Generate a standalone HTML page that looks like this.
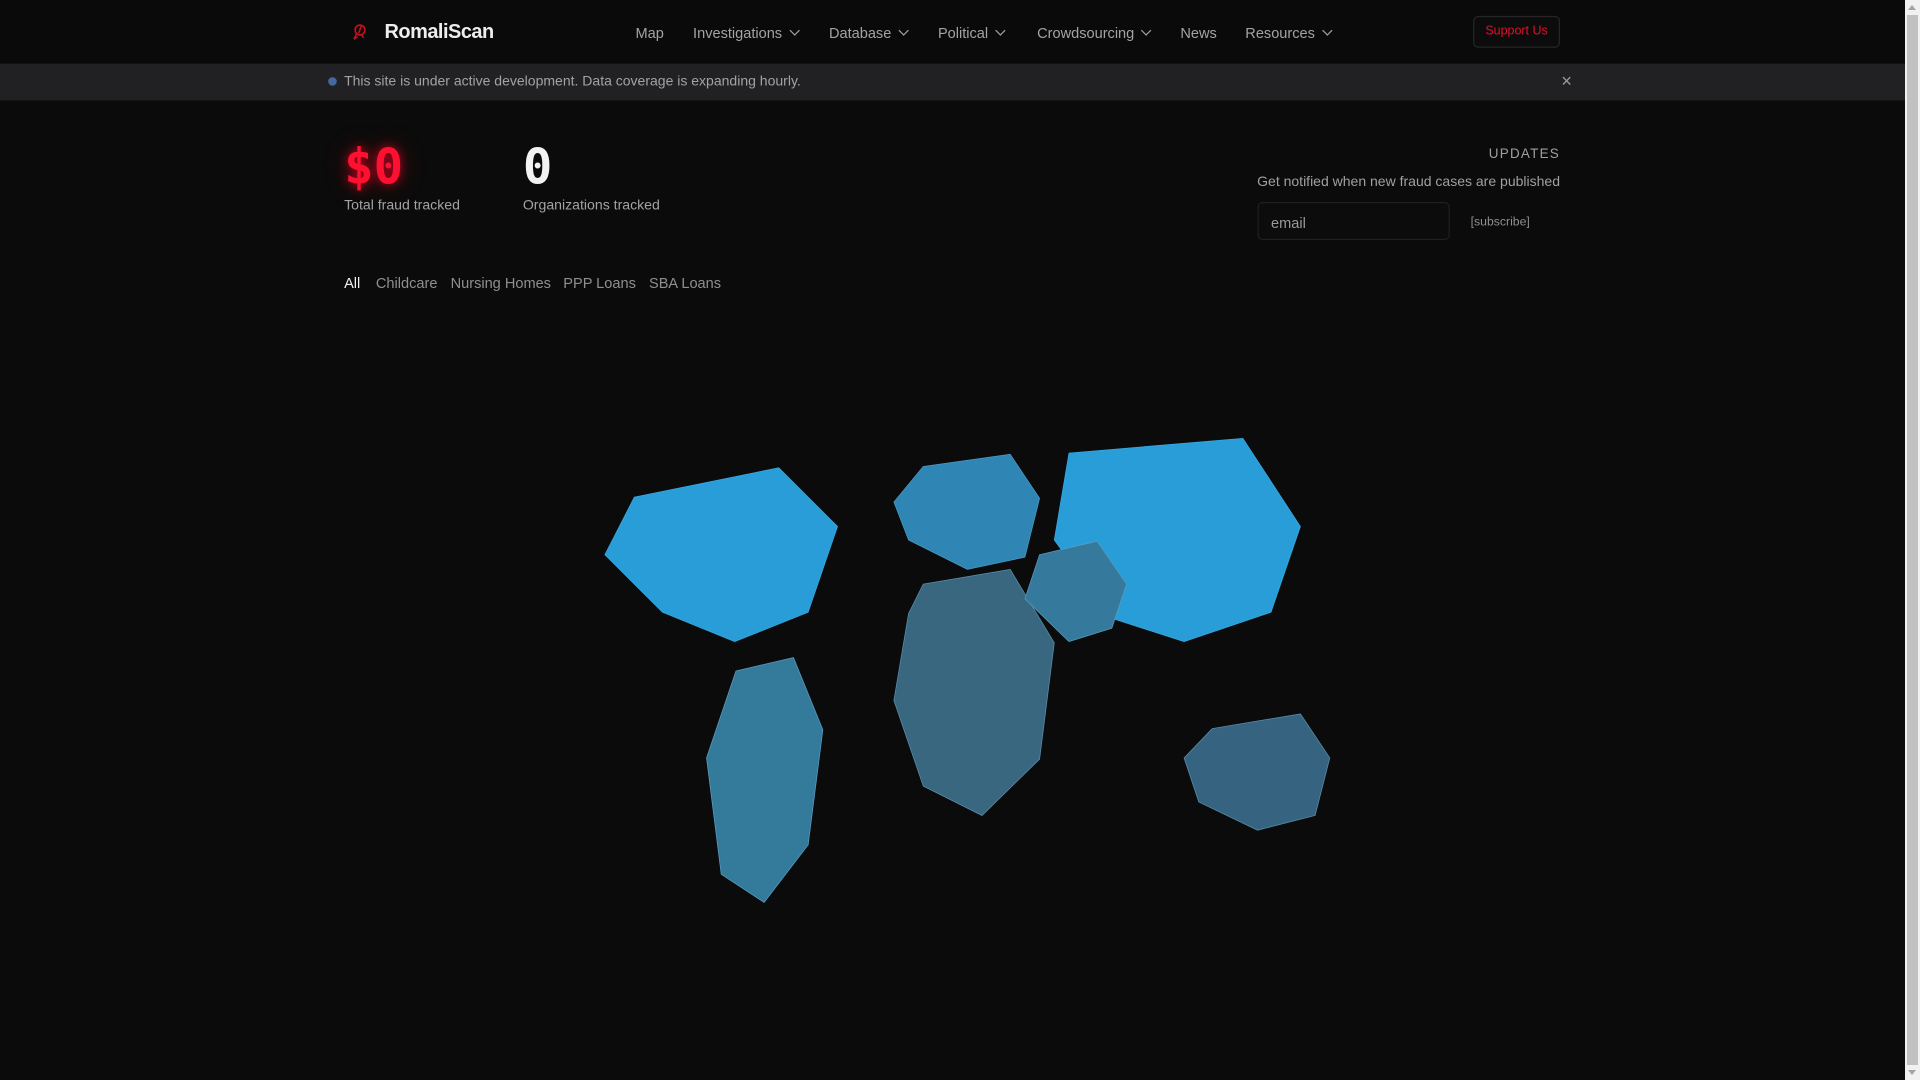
<!DOCTYPE html>
<html><head><meta charset="utf-8"><style>
html,body{margin:0;padding:0;background:#0b0b0b;overflow:hidden;width:1920px;height:1080px}
#s{position:absolute;left:0;top:0;width:1568px;height:882px;transform:scale(1.22449);transform-origin:0 0;font-family:"Liberation Sans",sans-serif;color:#a0a0a0}
.a{position:absolute;white-space:nowrap}
.nav{font-size:11.9px;color:#a3a3a3;top:19.5px}
.chev{display:inline-block;width:5px;height:5px;border-right:1.2px solid #a3a3a3;border-bottom:1.2px solid #a3a3a3;transform:rotate(45deg);margin-left:7px;position:relative;top:-3px}
.tab{font-size:11.9px;color:#8f8f8f;top:224px}
</style></head><body>
<div id="s">
<div class="a" style="left:0;top:0;width:1556px;height:52px;background:#0a0a0a;border-bottom:1px solid #141414"></div>
<svg class="a" style="left:286px;top:18px" width="16" height="16" viewBox="0 0 16 16"><circle cx="8" cy="6.5" r="4" fill="none" stroke="#c0101d" stroke-width="1.4"/><path d="M7 9 L9 3 M5 10 L3 14 M9 10 L11 13 M3 14 L6 12" stroke="#c0101d" stroke-width="1.3" fill="none"/></svg>
<div class="a" style="left:314px;top:16.5px;font-size:16.3px;font-weight:bold;color:#ededed;letter-spacing:-0.4px">RomaliScan</div>
<div class="a nav" style="left:519px">Map</div>
<div class="a nav" style="left:566px">Investigations<span class="chev"></span></div>
<div class="a nav" style="left:677px">Database<span class="chev"></span></div>
<div class="a nav" style="left:766px">Political<span class="chev"></span></div>
<div class="a nav" style="left:847px">Crowdsourcing<span class="chev"></span></div>
<div class="a nav" style="left:964px">News</div>
<div class="a nav" style="left:1017px">Resources<span class="chev"></span></div>
<div class="a" style="left:1203px;top:13px;width:69px;height:24px;border:1px solid #262626;border-radius:4px;background:#0c0c0c;color:#e0102a;font-size:10.2px;text-align:center;line-height:24px">Support Us</div>
<div class="a" style="left:0;top:52px;width:1556px;height:30px;background:#212022"></div>
<div class="a" style="left:268px;top:63px;width:7px;height:7px;border-radius:50%;background:#44699a"></div>
<div class="a" style="left:281px;top:60.5px;font-size:11.45px;color:#a3a3a3">This site is under active development. Data coverage is expanding hourly.</div>
<div class="a" style="left:1275px;top:58px;font-size:15px;color:#9a9a9a">×</div>
<div class="a" style="left:281px;top:114px;font-family:'DejaVu Sans Mono',monospace;font-weight:bold;font-size:40px;color:#ff1030;text-shadow:0 0 8px rgba(255,0,40,.7),0 0 20px rgba(255,0,40,.35)">$0</div>
<div class="a" style="left:281px;top:162px;font-size:11.5px;color:#a3a3a3">Total fraud tracked</div>
<div class="a" style="left:427px;top:114px;font-family:'DejaVu Sans Mono',monospace;font-weight:bold;font-size:40px;color:#f2f2f2">0</div>
<div class="a" style="left:427px;top:162px;font-size:11.5px;color:#a3a3a3">Organizations tracked</div>
<div class="a" style="right:294px;top:120px;font-size:11px;color:#a0a0a0;letter-spacing:1px">UPDATES</div>
<div class="a" style="right:294px;top:143px;font-size:11.45px;color:#a0a0a0">Get notified when new fraud cases are published</div>
<div class="a" style="left:1027px;top:165px;width:155px;height:29px;border:1px solid #1f1f1f;border-radius:4px;background:#0c0c0c"></div>
<div class="a" style="left:1038px;top:174.5px;font-size:11.9px;color:#9a9a9a">email</div>
<div class="a" style="left:1201px;top:175.5px;font-size:10px;color:#8f8f8f">[subscribe]</div>
<div class="a tab" style="left:281px;color:#f0f0f0">All</div>
<div class="a tab" style="left:307px">Childcare</div>
<div class="a tab" style="left:368px">Nursing Homes</div>
<div class="a tab" style="left:460px">PPP Loans</div>
<div class="a tab" style="left:530px">SBA Loans</div>
<svg class="a" style="left:0;top:0" width="1556" height="882">
<g stroke-width="0.6">
<polygon points="518,406 636,382 684,430 660,500 600,524 541,500 494,453" fill="#289dd8" stroke="#3aa8e0"/>
<polygon points="873,370 1015,358 1062,430 1038,500 967,524 908,505 861,441" fill="#289dd8" stroke="#3aa8e0"/>
<polygon points="754,381 825,371 849,407 837,455 790,465 742,441 730,410" fill="#2f86b4" stroke="#4a9ac5"/>
<polygon points="754,477 825,465 861,525 849,620 802,666 754,642 730,572 742,501" fill="#38677f" stroke="#5a8fb0"/>
<polygon points="849,453 896,442 920,477 908,513 873,524 837,489" fill="#357a9d" stroke="#5a9cc0"/>
<polygon points="601,548 648,537 672,596 660,690 624,737 589,714 577,619" fill="#347a9b" stroke="#5a9cc0"/>
<polygon points="990,595 1062,583 1086,619 1074,666 1027,678 979,655 967,619" fill="#366480" stroke="#5a8fb0"/>
</g></svg>
</div>
<div style="position:absolute;left:1905px;top:0;width:15px;height:1080px;background:#f1f1f1"></div>
<div style="position:absolute;left:1907px;top:15px;width:11px;height:1050px;background:#c1c1c1"></div>
<div style="position:absolute;left:1908px;top:5px;width:0;height:0;border-left:4.5px solid transparent;border-right:4.5px solid transparent;border-bottom:5px solid #a3a3a3"></div>
<div style="position:absolute;left:1908px;top:1070px;width:0;height:0;border-left:4.5px solid transparent;border-right:4.5px solid transparent;border-top:5px solid #a3a3a3"></div>
</body></html>
